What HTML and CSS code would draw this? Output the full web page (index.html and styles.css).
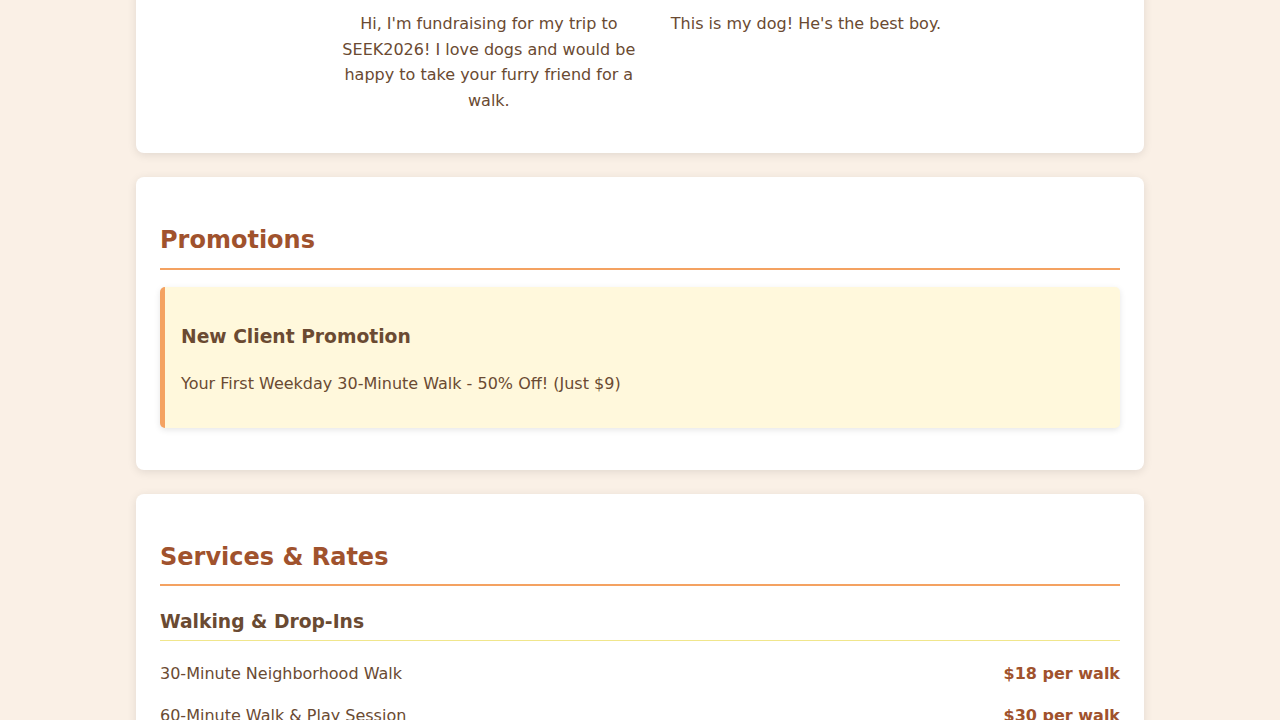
FILE: index.html
```html
<!DOCTYPE html>
<html lang="en">
<head>
<meta charset="utf-8">
<title>Dog Walking</title>
<link rel="stylesheet" href="styles.css">
</head>
<body>
<main class="page">
  <section class="card intro">
    <div class="intro-items">
      <p class="caption caption-center">Hi, I'm fundraising for my trip to SEEK2026! I love dogs and would be happy to take your furry friend for a walk.</p>
      <p class="caption">This is my dog! He's the best boy.</p>
    </div>
  </section>

  <section class="card">
    <h2 class="section-title">Promotions</h2>
    <div class="promo">
      <h3 class="promo-title">New Client Promotion</h3>
      <p class="promo-text">Your First Weekday 30-Minute Walk - 50% Off! (Just $9)</p>
    </div>
  </section>

  <section class="card">
    <h2 class="section-title">Services &amp; Rates</h2>
    <h3 class="group-title">Walking &amp; Drop-Ins</h3>
    <div class="rate-row"><span>30-Minute Neighborhood Walk</span><span class="price">$18 per walk</span></div>
    <div class="rate-row"><span>60-Minute Walk &amp; Play Session</span><span class="price">$30 per walk</span></div>
    <div class="rate-row"><span>30-Minute Drop-In Visit</span><span class="price">$15 per visit</span></div>
  </section>
</main>
</body>
</html>
```

FILE: styles.css
```css
* { box-sizing: border-box; }

body {
  margin: 0;
  background: #faf0e6;
  font-family: "DejaVu Sans", sans-serif;
  font-size: 16px;
  line-height: 1.6;
  color: #6a4a32;
}

.page {
  width: 1008px;
  margin: 0 auto;
  display: flex;
  flex-direction: column;
  gap: 24px;
  padding-bottom: 40px;
}

.card {
  background: #ffffff;
  border-radius: 8px;
  box-shadow: 0 2px 10px rgba(0, 0, 0, 0.1);
  padding: 24px;
}

.intro {
  margin-top: -13px;
  padding-bottom: 40px;
}

.intro-items {
  display: flex;
  justify-content: center;
  align-items: flex-start;
  gap: 32px;
}

.caption {
  margin: 0;
}

.caption-center {
  max-width: 300px;
  text-align: center;
}

.section-title {
  margin: 20px 0 17px;
  font-size: 24px;
  color: #a0522d;
  padding-bottom: 8px;
  border-bottom: 2px solid #f4a261;
}

.promo {
  background: #fff8dc;
  border-left: 5px solid #f4a261;
  border-radius: 5px;
  box-shadow: 0 2px 6px rgba(0, 0, 0, 0.1);
  padding: 17px 16px 15px;
  margin-bottom: 18px;
}

.promo-title {
  font-size: 18.72px;
  margin: 18.72px 0;
  color: #6a4a32;
}

.promo-text {
  margin: 16px 0;
}

.group-title {
  font-size: 18.72px;
  margin: 21px 0 12px;
  padding-bottom: 3px;
  border-bottom: 1px solid #f0e68c;
  color: #6a4a32;
}

.rate-row {
  display: flex;
  justify-content: space-between;
  padding: 8px 0;
}

.price {
  font-weight: bold;
  color: #a0522d;
}
```
